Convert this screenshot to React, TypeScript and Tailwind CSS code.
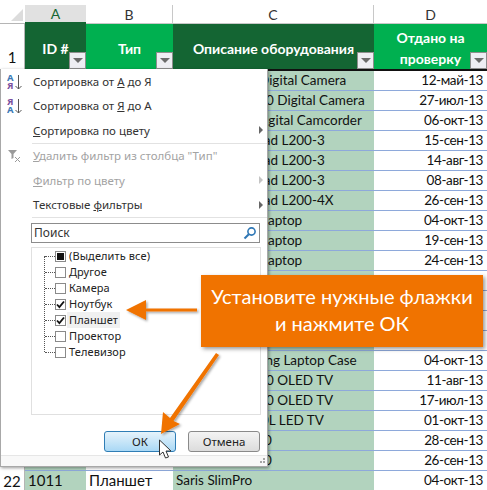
const rows = [
    { n: 2, id: '', type: '', c: 'Digital Camera', pad: 'pl-[86px]', d: '12-май-13' },
    { n: 3, id: '', type: '', c: '0 Digital Camera', pad: 'pl-[93px]', d: '27-июл-13' },
    { n: 4, id: '', type: '', c: 'Digital Camcorder', pad: 'pl-[82px]', d: '06-окт-13' },
    { n: 5, id: '', type: '', c: 'IdeaPad L200-3', pad: 'pl-[58px]', d: '15-сен-13' },
    { n: 6, id: '', type: '', c: 'IdeaPad L200-3', pad: 'pl-[58px]', d: '14-авг-13' },
    { n: 7, id: '', type: '', c: 'IdeaPad L200-3', pad: 'pl-[58px]', d: '08-авг-13' },
    { n: 8, id: '', type: '', c: 'IdeaPad L200-4X', pad: 'pl-[58px]', d: '26-сен-13' },
    { n: 9, id: '', type: '', c: 'Laptop', pad: 'pl-[88px]', d: '04-окт-13' },
    { n: 10, id: '', type: '', c: 'Laptop', pad: 'pl-[88px]', d: '19-сен-13' },
    { n: 11, id: '', type: '', c: 'Laptop', pad: 'pl-[88px]', d: '24-сен-13' },
    { n: 12, id: '', type: '', c: '', pad: '', d: '' },
    { n: 13, id: '', type: '', c: '', pad: '', d: '' },
    { n: 14, id: '', type: '', c: '', pad: '', d: '' },
    { n: 15, id: '', type: '', c: '', pad: '', d: '' },
    { n: 16, id: '', type: '', c: 'Samsung Laptop Case', pad: 'pl-[54px]', d: '04-окт-13' },
    { n: 17, id: '', type: '', c: '0 OLED TV', pad: 'pl-[93px]', d: '11-авг-13' },
    { n: 18, id: '', type: '', c: '0 OLED TV', pad: 'pl-[93px]', d: '17-июл-13' },
    { n: 19, id: '', type: '', c: '0L LED TV', pad: 'pl-[88px]', d: '01-окт-13' },
    { n: 20, id: '', type: '', c: '0', pad: 'pl-[91px]', d: '28-сен-13' },
    { n: 21, id: '', type: '', c: '0', pad: 'pl-[91px]', d: '26-сен-13' },
    { n: 22, id: '1011', type: 'Планшет', c: 'Saris SlimPro', pad: 'pl-[3px]', d: '04-окт-13' },
]

const filterItems = [
    { label: '(Выделить все)', state: 'mixed' },
    { label: 'Другое', state: 'off' },
    { label: 'Камера', state: 'off' },
    { label: 'Ноутбук', state: 'on' },
    { label: 'Планшет', state: 'on', hover: true },
    { label: 'Проектор', state: 'off' },
    { label: 'Телевизор', state: 'off' },
]

function FilterButton() {
    return (
        <div className="absolute bottom-0 right-0 flex h-[17px] w-[17px] items-center justify-center border border-[#8e8e8e] bg-[#eeeef3]">
            <div className="h-0 w-0 border-x-[5px] border-t-[5px] border-x-transparent border-t-[#6b6b6b]" />
        </div>
    )
}

function HeaderCell({ dark, children }: { dark?: boolean; children: React.ReactNode }) {
    return (
        <div
            className={`relative flex h-[45px] items-center justify-center text-center text-[14px] leading-[21px] font-bold text-white ${
                dark ? 'bg-[#146533]' : 'bg-[#00b050]'
            }`}
        >
            {children}
            <FilterButton />
        </div>
    )
}

function MenuRow({
    children,
    disabled,
    arrow,
    icon,
}: {
    children: React.ReactNode
    disabled?: boolean
    arrow?: boolean
    icon?: React.ReactNode
}) {
    return (
        <div className={`flex h-[24.5px] items-center pr-[4px] ${disabled ? 'text-[#a3a3a3]' : 'text-[#333]'}`}>
            <div className="flex w-[32px] shrink-0 items-center justify-center pr-[5px]">{icon}</div>
            <div className="flex-1 whitespace-pre">{children}</div>
            {arrow && (
                <div
                    className={`h-0 w-0 border-y-[4px] border-l-[4px] border-y-transparent ${
                        disabled ? 'border-l-[#c4c4c4]' : 'border-l-[#666]'
                    }`}
                />
            )}
        </div>
    )
}

// the two letters sit tighter than their line boxes, so this one is an svg
function SortIcon({ top, bottom, topColor, bottomColor }: { top: string; bottom: string; topColor: string; bottomColor: string }) {
    return (
        <svg width="15" height="17" viewBox="0 0 15 17" className="font-['Noto_Sans',sans-serif] text-[9.5px] font-bold">
            <text x="0" y="8" fill={topColor}>
                {top}
            </text>
            <text x="0" y="16" fill={bottomColor}>
                {bottom}
            </text>
            <path d="M11.5 2v14M8.5 13l3 3 3-3" fill="none" stroke="#555" strokeWidth="1" />
        </svg>
    )
}

function CheckBox({ state }: { state: string }) {
    return (
        <div className="flex h-[11px] w-[11px] items-center justify-center border border-[#8a8a8a] bg-white">
            {state === 'mixed' && <div className="h-[7px] w-[7px] bg-[#111]" />}
            {state === 'on' && (
                <svg width="9" height="9" viewBox="0 0 9 9">
                    <path d="M1 4.5l2.4 2.6L8 1.5" fill="none" stroke="#111" strokeWidth="1.8" />
                </svg>
            )}
        </div>
    )
}

function FilterMenu() {
    return (
        <div className="absolute top-[69px] left-0 flex h-[398px] w-[268px] flex-col border border-t-0 border-[#a8a8a8] bg-white font-['Noto_Sans',sans-serif] text-[11.5px] shadow-[1px_1px_3px_rgba(0,0,0,0.4)]">
            <MenuRow icon={<SortIcon top="А" bottom="Я" topColor="#3b78b5" bottomColor="#7a4f9e" />}>
                Сортировка от <u>А</u> до Я
            </MenuRow>
            <MenuRow icon={<SortIcon top="Я" bottom="А" topColor="#7a4f9e" bottomColor="#3b78b5" />}>
                Сортировка от <u>Я</u> до А
            </MenuRow>
            <MenuRow arrow>
                <u>С</u>ортировка по цвету
            </MenuRow>
            <div className="ml-[31px] h-px bg-[#e2e2e2]" />
            <MenuRow
                disabled
                icon={
                    <svg width="16" height="14" viewBox="0 0 16 14">
                        <path d="M1 1h9L6.5 5v4L4.5 10V5z" fill="#9a9a9a" />
                        <path d="M8 8l5 5M13 8l-5 5" stroke="#9a9a9a" strokeWidth="1" />
                    </svg>
                }
            >
                <u>У</u>далить фильтр из столбца "Тип"
            </MenuRow>
            <MenuRow disabled arrow>
                <u>Ф</u>ильтр по цвету
            </MenuRow>
            <MenuRow arrow>
                Текстовые <u>ф</u>ильтры
            </MenuRow>
            <div className="ml-[31px] h-px bg-[#e2e2e2]" />
            <div className="mt-[5px] ml-[30px] flex h-[20px] w-[229px] items-center justify-between border border-[#8c8c8c] px-[2px] text-[12px] text-[#333]">
                <span>Поиск</span>
                <svg width="14" height="14" viewBox="0 0 14 14">
                    <circle cx="8.5" cy="5.5" r="3.6" fill="none" stroke="#2f77b5" strokeWidth="1.6" />
                    <path d="M5.8 8.2L1.5 12.5" stroke="#2f77b5" strokeWidth="2" />
                </svg>
            </div>
            <div className="relative mt-[4px] ml-[30px] h-[168px] w-[230px] border border-[#e0e0e0] pl-[13px] text-[11px] tracking-[0.1px] text-[#222]">
                <div className="absolute top-[8px] left-[12px] h-[96px] border-l border-dotted border-[#555]" />
                {filterItems.map((item) => (
                    <div key={item.label} className="flex h-[16px] items-center">
                        <div className="w-[10px] border-t border-dotted border-[#555]" />
                        <CheckBox state={item.state} />
                        <div className={`ml-[1px] px-[2px] leading-[16px] ${item.hover ? 'bg-[#f0f0f0]' : ''}`}>{item.label}</div>
                    </div>
                ))}
            </div>
            <div className="mt-[16px] flex justify-end gap-[12px] pr-[7px]">
                <div className="flex h-[21px] w-[72px] items-center justify-center rounded-[3px] border border-[#2f7db5] bg-gradient-to-b from-[#e6f3fb] to-[#a9d8f5] text-[#222]">
                    ОК
                </div>
                <div className="flex h-[21px] w-[72px] items-center justify-center rounded-[3px] border border-[#8a8a8a] bg-gradient-to-b from-[#f4f4f4] to-[#dcdcdc] text-[#222]">
                    Отмена
                </div>
            </div>
            <div className="mt-auto flex h-[11px] items-end justify-end border-t border-[#e6e6e6] bg-[#f8f8f8] pr-[1px] pb-[1px]">
                <svg width="8" height="8" viewBox="0 0 8 8" fill="#a5a5a5">
                    <rect x="5" y="1" width="2" height="2" />
                    <rect x="2" y="4" width="2" height="2" />
                    <rect x="5" y="4" width="2" height="2" />
                </svg>
            </div>
        </div>
    )
}

export default function App() {
    return (
        <div className="relative h-[490px] w-[487px] overflow-hidden bg-white font-['Lato','Noto_Sans',sans-serif] text-[15px] text-[#111]">
            <div className="grid grid-cols-[25px_61px_87px_201px_113px] pt-[5px]">
                <div className="relative h-[19px] border-b border-[#b5b5b5] bg-white">
                    <div className="absolute right-[2px] bottom-[2px] h-0 w-0 border-b-[12px] border-l-[12px] border-b-[#dcdcdc] border-l-transparent" />
                </div>
                <div className="flex h-[19px] items-center justify-center border-b-2 border-[#146533] bg-[#e1e1e1] text-[14px] text-[#146533]">A</div>
                <div className="flex h-[19px] items-center justify-center border-r border-b border-[#c8c8c8] text-[14px] text-[#333]">B</div>
                <div className="flex h-[19px] items-center justify-center border-r border-b border-[#c8c8c8] text-[14px] text-[#333]">C</div>
                <div className="flex h-[19px] items-center justify-center border-b border-[#c8c8c8] text-[14px] text-[#333]">D</div>

                <div className="flex h-[45px] items-end justify-center border-r border-[#b5b5b5] pb-[1px]">1</div>
                <HeaderCell dark>
                    <span className="mt-[4px]">ID #</span>
                </HeaderCell>
                <HeaderCell>
                    <span className="mt-[4px]">Тип</span>
                </HeaderCell>
                <HeaderCell dark>
                    <span className="mt-[4px]">Описание оборудования</span>
                </HeaderCell>
                <HeaderCell>
                    <span className="mt-[3px]">
                        Отдано на
                        <br />
                        проверку
                    </span>
                </HeaderCell>

                <div className="col-span-5 h-[2px] bg-[linear-gradient(90deg,#fff_25px,#111_25px)]" />

                {rows.map((row) => (
                    <div key={row.n} className="contents">
                        <div className="flex h-[20px] items-center justify-center border-r border-[#b5b5b5]">{row.n === 22 ? row.n : ''}</div>
                        <div className="flex h-[20px] items-center border-b border-[#8ea9db] bg-[#b2d3be] pl-[3px]">{row.id}</div>
                        <div className="flex h-[20px] items-center border-b border-[#8ea9db] pl-[3px]">{row.type}</div>
                        <div className={`flex h-[20px] items-center border-b border-[#8ea9db] bg-[#b2d3be] text-[13.5px] whitespace-pre ${row.pad}`}>{row.c}</div>
                        <div className="flex h-[20px] items-center justify-end border-b border-[#8ea9db] pr-[4px] text-[13.5px] tracking-[-0.4px]">{row.d}</div>
                    </div>
                ))}
            </div>

            <FilterMenu />

            <div className="absolute top-[275px] left-[201px] flex h-[72px] w-[282px] items-center justify-center bg-[#f07300] pb-[3px] text-center text-[20px] leading-[27px] text-white shadow-[2px_2px_4px_rgba(0,0,0,0.4)]">
                <span>
                    Установите нужные флажки
                    <br />и нажмите ОК
                </span>
            </div>

            <svg className="absolute top-0 left-0" width="487" height="490" viewBox="0 0 487 490">
                <defs>
                    <filter id="sh" x="-20%" y="-20%" width="150%" height="150%">
                        <feDropShadow dx="1.5" dy="1.5" stdDeviation="1.2" floodColor="#000" floodOpacity="0.35" />
                    </filter>
                </defs>
                <g fill="#f07300" filter="url(#sh)">
                    <path d="M126 310L146 300V308.5H197V311.5H146V320Z" />
                    <path d="M216 353L219 355L173.5 421L180 424L161 434L163 412L170 418Z" />
                </g>
                <path d="M159.5 440V455L163 452L165.5 458L168.5 457L166 451H171Z" fill="#fff" stroke="#333" strokeWidth="1" />
            </svg>
        </div>
    )
}
